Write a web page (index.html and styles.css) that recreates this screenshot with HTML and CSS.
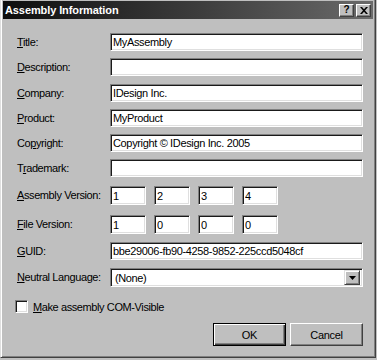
FILE: index.html
```html
<!DOCTYPE html>
<html lang="en">
  <head>
    <meta charset="UTF-8" />
    <title>Assembly Information</title>
    <link rel="stylesheet" href="styles.css">
  </head>
  <body>
    <div class="window">
      <div class="titlebar">
        <span class="title">Assembly Information</span>
        <div class="caption-buttons">
          <button class="cap-btn">?</button>
          <button class="cap-btn close">
            <svg width="8" height="7" viewBox="0 0 8 7"><path d="M0 0h2l2 2.3L6 0h2L5 3.5 8 7H6L4 4.7 2 7H0l3-3.5z" fill="#000"/></svg>
          </button>
        </div>
      </div>

      <div class="form">
        <label><u>T</u>itle:</label>
        <input class="field" type="text" value="MyAssembly">

        <label><u>D</u>escription:</label>
        <input class="field" type="text" value="">

        <label><u>C</u>ompany:</label>
        <input class="field" type="text" value="IDesign Inc.">

        <label><u>P</u>roduct:</label>
        <input class="field" type="text" value="MyProduct">

        <label>Co<u>p</u>yright:</label>
        <input class="field" type="text" value="Copyright © IDesign Inc. 2005">

        <label>T<u>r</u>ademark:</label>
        <input class="field" type="text" value="">

        <label class="tall"><u>A</u>ssembly Version:</label>
        <div class="version">
          <input class="field" type="text" value="1">
          <input class="field" type="text" value="2">
          <input class="field" type="text" value="3">
          <input class="field" type="text" value="4">
        </div>

        <label class="tall"><u>F</u>ile Version:</label>
        <div class="version">
          <input class="field" type="text" value="1">
          <input class="field" type="text" value="0">
          <input class="field" type="text" value="0">
          <input class="field" type="text" value="0">
        </div>

        <label><u>G</u>UID:</label>
        <input class="field" type="text" value="bbe29006-fb90-4258-9852-225ccd5048cf">

        <label class="tall"><u>N</u>eutral Language:</label>
        <div class="combo">
          <span class="combo-text">(None)</span>
          <span class="combo-btn">
            <svg width="7" height="4" viewBox="0 0 7 4"><path d="M0 0h7L3.5 4z" fill="#000"/></svg>
          </span>
        </div>
      </div>

      <div class="check-row">
        <span class="checkbox"></span>
        <span><u>M</u>ake assembly COM-Visible</span>
      </div>

      <div class="buttons">
        <button class="btn default">OK</button>
        <button class="btn">Cancel</button>
      </div>
    </div>
  </body>
</html>
```

FILE: styles.css
```css
body {
  margin: 0;
  background: #bfbfbf;
  font-family: "Liberation Sans", Arial, sans-serif;
  font-size: 11px;
  letter-spacing: -0.4px;
  color: #000;
}
.window {
  width: 370px;
  height: 354px;
  padding: 1px 2px 2px 2px;
  background: #bfbfbf;
  border: 1px solid;
  border-top: none;
  border-color: #dfdfdf #404040 #404040 #dfdfdf;
  box-shadow: inset 1px 0 #fff, inset -1px -1px #808080;
}
.titlebar {
  height: 18px;
  display: flex;
  align-items: center;
  justify-content: space-between;
  padding: 0 2px 0 2px;
  background: linear-gradient(to right, #0e0e0e, #3a3a3a 50%, #6a6a6a);
}
.title {
  color: #fff;
  font-weight: bold;
  font-size: 11px;
  letter-spacing: -0.1px;
}
.caption-buttons {
  display: flex;
  gap: 2px;
}
.cap-btn {
  width: 15px;
  height: 13px;
  padding: 0;
  display: flex;
  align-items: center;
  justify-content: center;
  background: #bfbfbf;
  border: 1px solid;
  border-color: #fff #404040 #404040 #fff;
  box-shadow: inset -1px -1px #808080;
  font-family: "Liberation Sans", Arial, sans-serif;
  font-weight: bold;
  font-size: 10px;
  line-height: 1;
  color: #000;
}
.form {
  display: grid;
  grid-template-columns: 93px 253px;
  grid-template-rows: 25px 26px 25px 25px 25px 27px 29px 27px 26px 19px;
  align-items: start;
  margin-top: 14px;
  padding-left: 14px;
}
.form label {
  height: 18px;
  line-height: 18px;
  white-space: nowrap;
}
.form label.tall {
  height: 19px;
  line-height: 19px;
}
.field {
  box-sizing: border-box;
  width: 100%;
  height: 18px;
  margin: 0;
  padding: 0 2px;
  background: #fff;
  border: 1px solid;
  border-color: #808080 #fff #fff #808080;
  box-shadow: inset 1px 1px #1a1a1a, inset -1px -1px #dfdfdf;
  font-family: "Liberation Sans", Arial, sans-serif;
  font-size: 11px;
  letter-spacing: -0.35px;
  color: #000;
  outline: none;
}
.version {
  display: flex;
  gap: 8px;
}
.version .field {
  width: 36px;
  height: 19px;
}
.combo {
  box-sizing: border-box;
  height: 19px;
  display: flex;
  align-items: center;
  justify-content: space-between;
  padding: 2px 2px 2px 4px;
  background: #fff;
  border: 1px solid;
  border-color: #808080 #fff #fff #808080;
  box-shadow: inset 1px 1px #1a1a1a, inset -1px -1px #dfdfdf;
}
.combo-btn {
  box-sizing: border-box;
  width: 16px;
  height: 15px;
  display: flex;
  align-items: center;
  justify-content: center;
  background: #bfbfbf;
  border: 1px solid;
  border-color: #dfdfdf #404040 #404040 #dfdfdf;
  box-shadow: inset 1px 1px #fff, inset -1px -1px #808080;
}
.check-row {
  display: flex;
  align-items: center;
  gap: 5px;
  margin-top: 13px;
  padding-left: 12px;
  height: 13px;
}
.checkbox {
  box-sizing: border-box;
  width: 13px;
  height: 13px;
  background: #fff;
  border: 1px solid;
  border-color: #808080 #fff #fff #808080;
  box-shadow: inset 1px 1px #1a1a1a, inset -1px -1px #dfdfdf;
}
.buttons {
  display: flex;
  justify-content: flex-end;
  gap: 4px;
  margin-top: 10px;
  padding-right: 10px;
}
.btn {
  box-sizing: border-box;
  width: 73px;
  height: 23px;
  padding: 0;
  background: #bfbfbf;
  border: 1px solid;
  border-color: #fff #404040 #404040 #fff;
  box-shadow: inset -1px -1px #808080;
  font-family: "Liberation Sans", Arial, sans-serif;
  font-size: 11px;
  letter-spacing: -0.3px;
  color: #000;
}
.btn.default {
  border: 1px solid #000;
  box-shadow: inset 1px 1px #fff, inset -1px -1px #404040, inset -2px -2px #808080;
}
```
